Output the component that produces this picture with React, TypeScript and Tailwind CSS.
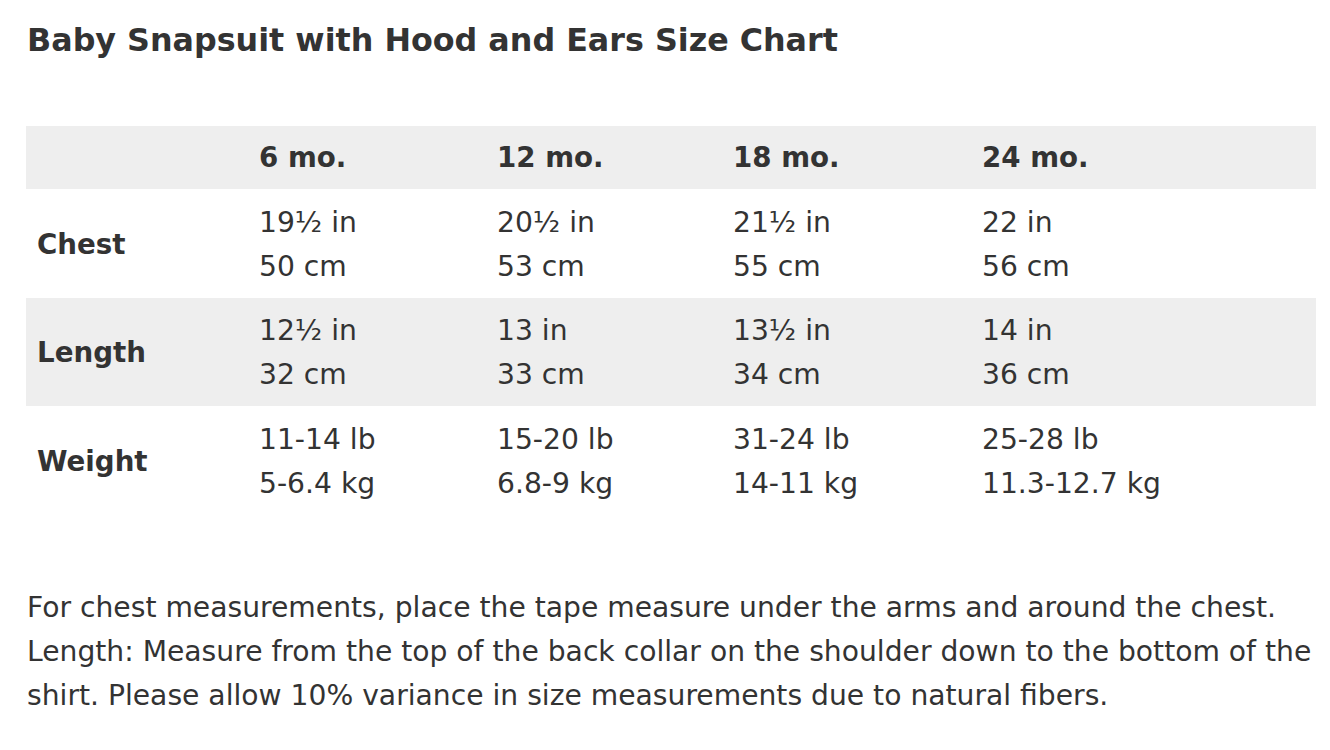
import React from "react";

const cols = ["6 mo.", "12 mo.", "18 mo.", "24 mo."];
const rows: { label: string; vals: [string, string][]; gray: boolean; h: string }[] = [
  { label: "Chest", vals: [["19½ in", "50 cm"], ["20½ in", "53 cm"], ["21½ in", "55 cm"], ["22 in", "56 cm"]], gray: false, h: "h-[109px]" },
  { label: "Length", vals: [["12½ in", "32 cm"], ["13 in", "33 cm"], ["13½ in", "34 cm"], ["14 in", "36 cm"]], gray: true, h: "h-[108px]" },
  { label: "Weight", vals: [["11-14 lb", "5-6.4 kg"], ["15-20 lb", "6.8-9 kg"], ["31-24 lb", "14-11 kg"], ["25-28 lb", "11.3-12.7 kg"]], gray: false, h: "h-[109px]" },
];

export default function App() {
  return (
    <div
      className="w-[1330px] h-[750px] bg-white text-[#333333] px-[26px] pt-[18px]"
      style={{ fontFamily: '"DejaVu Sans", Verdana, sans-serif' }}
    >
      <h1 className="text-[31.75px] font-bold leading-[44px] ml-[1px]">Baby Snapsuit with Hood and Ears Size Chart</h1>
      <table className="mt-[64px] w-[1290px] border-collapse text-[28.2px] leading-[44px] table-fixed">
        <colgroup>
          <col className="w-[222px]" />
          <col className="w-[238px]" />
          <col className="w-[236px]" />
          <col className="w-[249px]" />
          <col className="w-[345px]" />
        </colgroup>
        <thead>
          <tr className="bg-[#eeeeee]">
            <th className="h-[63px]"></th>
            {cols.map((c) => (
              <th key={c} className="text-left font-bold px-[11px] pt-[10px] pb-[9px] text-[27.7px]">{c}</th>
            ))}
          </tr>
        </thead>
        <tbody>
          {rows.map((r) => (
            <tr key={r.label} className={r.gray ? "bg-[#eeeeee]" : "bg-white"}>
              <td className={`font-bold px-[11px] pt-[11px] pb-[9px] text-[27.7px] ${r.h}`}>{r.label}</td>
              {r.vals.map((v, i) => (
                <td key={i} className="px-[11px] pt-[11px] pb-[9px] whitespace-nowrap">
                  <div>{v[0]}</div>
                  <div>{v[1]}</div>
                </td>
              ))}
            </tr>
          ))}
        </tbody>
      </table>
      <p className="mt-[71px] text-[28.2px] leading-[44px] ml-[1px] whitespace-nowrap">
        For chest measurements, place the tape measure under the arms and around the chest.
        <br />
        Length: Measure from the top of the back collar on the shoulder down to the bottom of the
        <br />
        shirt. Please allow 10% variance in size measurements due to natural fibers.
      </p>
    </div>
  );
}
